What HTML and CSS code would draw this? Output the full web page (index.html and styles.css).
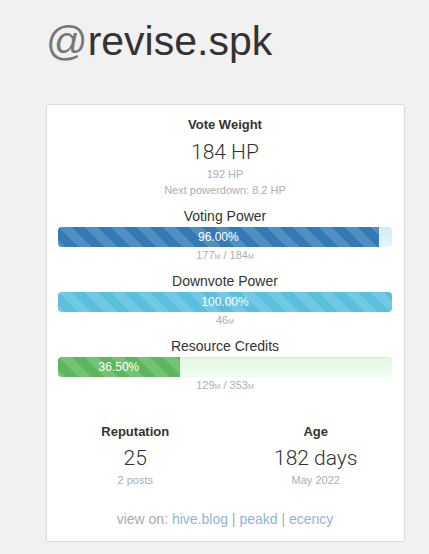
FILE: index.html
```html
<!DOCTYPE html>
<html>
<head>
<meta charset="utf-8">
<link rel="stylesheet" href="styles.css">
</head>
<body>
<div class="page">
  <h1 class="title"><span class="at">@</span>revise.spk</h1>
  <div class="card">
    <div class="label strong first">Vote Weight</div>
    <div class="big">184 HP</div>
    <div class="sub">192 HP</div>
    <div class="sub">Next powerdown: 8.2 HP</div>

    <div class="label meter-label meter-first">Voting Power</div>
    <div class="progress progress-blue">
      <div class="bar bar-primary" style="width: 96%">96.00%</div>
    </div>
    <div class="sub">177<small>M</small> / 184<small>M</small></div>

    <div class="label meter-label">Downvote Power</div>
    <div class="progress progress-blue">
      <div class="bar bar-info" style="width: 100%">100.00%</div>
    </div>
    <div class="sub">46<small>M</small></div>

    <div class="label meter-label">Resource Credits</div>
    <div class="progress progress-green">
      <div class="bar bar-success" style="width: 36.5%">36.50%</div>
    </div>
    <div class="sub">129<small>M</small> / 353<small>M</small></div>

    <div class="stats">
      <div class="stat">
        <div class="label strong">Reputation</div>
        <div class="big stat-big">25</div>
        <div class="sub">2 posts</div>
      </div>
      <div class="stat">
        <div class="label strong">Age</div>
        <div class="big stat-big">182 days</div>
        <div class="sub">May 2022</div>
      </div>
    </div>

    <div class="links">view on: <a href="#">hive.blog</a> | <a href="#">peakd</a> | <a href="#">ecency</a></div>
  </div>
</div>
</body>
</html>
```

FILE: styles.css
```css
html, body {
  margin: 0;
  padding: 0;
  background: #f1f1f1;
  font-family: "Liberation Sans", Arial, Helvetica, sans-serif;
  color: #333;
}

.page {
  padding: 16px 0 0 46px;
}

.title {
  margin: 0 0 38px 0;
  font-size: 41px;
  line-height: 50px;
  font-weight: 400;
  color: #333;
}

.title .at {
  color: #777;
}

.card {
  box-sizing: border-box;
  width: 359px;
  background: #fff;
  border: 1px solid #dcdcdc;
  border-radius: 3px;
  box-shadow: 0 1px 2px rgba(0, 0, 0, 0.06);
  padding: 10px 12px 12px 11px;
  text-align: center;
}

.label {
  font-size: 14px;
  line-height: 20px;
  color: #333;
}

.label.strong {
  font-size: 13px;
  font-weight: 700;
}

.meter-label {
  margin-top: 6px;
}

.meter-label.meter-first {
  margin-top: 8px;
}

.big {
  font-family: Roboto, "Liberation Sans", sans-serif;
  font-weight: 300;
  font-size: 21px;
  line-height: 24px;
  margin-top: 5px;
  color: #333;
}

.sub {
  font-size: 11px;
  line-height: 16px;
  color: #aeaeae;
}

.big + .sub {
  margin-top: 2px;
}

.sub small {
  font-size: 7px;
}

.progress {
  margin-top: 1px;
  height: 20px;
  border-radius: 4px;
  overflow: hidden;
  display: flex;
  box-shadow: inset 0 1px 2px rgba(0, 0, 0, 0.05);
}

.progress-blue {
  background: linear-gradient(to bottom, #d3eef9, #e4f5fc);
}

.progress-green {
  background: linear-gradient(to bottom, #e2f8e2, #f1fcf1);
}

.bar {
  height: 100%;
  color: #fff;
  font-size: 12px;
  line-height: 20px;
  text-align: center;
  background-size: 26px 26px;
  background-image: linear-gradient(45deg,
    rgba(255, 255, 255, 0.15) 25%, transparent 25%,
    transparent 50%, rgba(255, 255, 255, 0.15) 50%,
    rgba(255, 255, 255, 0.15) 75%, transparent 75%, transparent);
}

.bar-primary {
  background-color: #337ab7;
}

.bar-info {
  background-color: #5bc0de;
}

.bar-success {
  background-color: #5cb85c;
}

.stats {
  display: grid;
  grid-template-columns: 1fr 1fr;
  column-gap: 4px;
  margin: 27px -12px 0 -11px;
}

.stat-big {
  margin-top: 4px;
}

.links {
  margin-top: 21px;
  font-size: 14px;
  line-height: 20px;
  color: #aaa;
}

.links a {
  color: #8fb4d6;
  text-decoration: none;
}
```
